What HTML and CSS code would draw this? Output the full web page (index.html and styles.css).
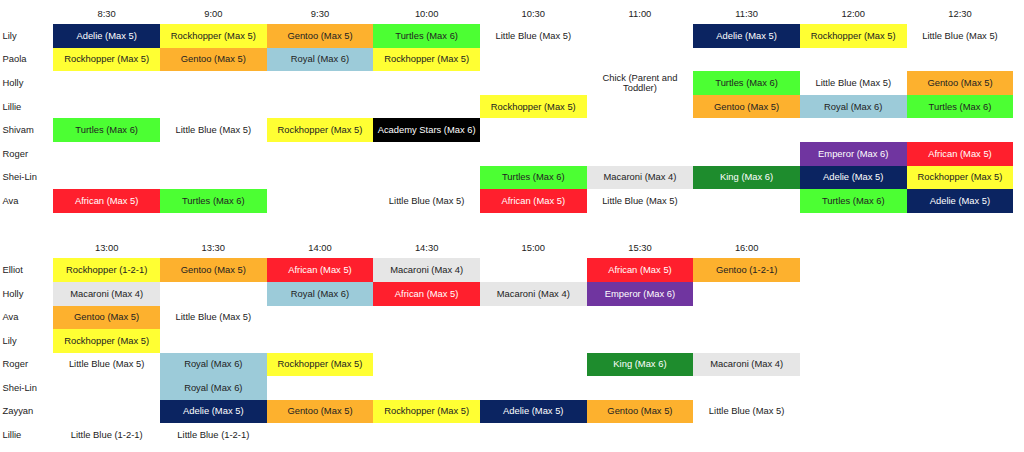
FILE: index.html
```html
<!DOCTYPE html>
<html>
<head>
<meta charset="utf-8">
<link rel="stylesheet" href="styles.css">
</head>
<body>
<table class="sched sched-9">
  <colgroup><col class="c-name"><col class="c-slot"><col class="c-slot"><col class="c-slot"><col class="c-slot"><col class="c-slot"><col class="c-slot"><col class="c-slot"><col class="c-slot"><col class="c-slot"></colgroup>
  <thead>
    <tr><th></th><th>8:30</th><th>9:00</th><th>9:30</th><th>10:00</th><th>10:30</th><th>11:00</th><th>11:30</th><th>12:00</th><th>12:30</th></tr>
  </thead>
  <tbody>
    <tr><td class="name">Lily</td><td class="adelie">Adelie (Max 5)</td><td class="rock">Rockhopper (Max 5)</td><td class="gentoo">Gentoo (Max 5)</td><td class="turtles">Turtles (Max 6)</td><td>Little Blue (Max 5)</td><td></td><td class="adelie">Adelie (Max 5)</td><td class="rock">Rockhopper (Max 5)</td><td>Little Blue (Max 5)</td></tr>
    <tr><td class="name">Paola</td><td class="rock">Rockhopper (Max 5)</td><td class="gentoo">Gentoo (Max 5)</td><td class="royal">Royal (Max 6)</td><td class="rock">Rockhopper (Max 5)</td><td></td><td></td><td></td><td></td><td></td></tr>
    <tr><td class="name">Holly</td><td></td><td></td><td></td><td></td><td></td><td class="chick">Chick (Parent and Toddler)</td><td class="turtles">Turtles (Max 6)</td><td>Little Blue (Max 5)</td><td class="gentoo">Gentoo (Max 5)</td></tr>
    <tr><td class="name">Lillie</td><td></td><td></td><td></td><td></td><td class="rock">Rockhopper (Max 5)</td><td></td><td class="gentoo">Gentoo (Max 5)</td><td class="royal">Royal (Max 6)</td><td class="turtles">Turtles (Max 6)</td></tr>
    <tr><td class="name">Shivam</td><td class="turtles">Turtles (Max 6)</td><td>Little Blue (Max 5)</td><td class="rock">Rockhopper (Max 5)</td><td class="academy">Academy Stars (Max 6)</td><td></td><td></td><td></td><td></td><td></td></tr>
    <tr><td class="name">Roger</td><td></td><td></td><td></td><td></td><td></td><td></td><td></td><td class="emperor">Emperor (Max 6)</td><td class="african">African (Max 5)</td></tr>
    <tr><td class="name">Shei-Lin</td><td></td><td></td><td></td><td></td><td class="turtles">Turtles (Max 6)</td><td class="macaroni">Macaroni (Max 4)</td><td class="king">King (Max 6)</td><td class="adelie">Adelie (Max 5)</td><td class="rock">Rockhopper (Max 5)</td></tr>
    <tr><td class="name">Ava</td><td class="african">African (Max 5)</td><td class="turtles">Turtles (Max 6)</td><td></td><td>Little Blue (Max 5)</td><td class="african">African (Max 5)</td><td>Little Blue (Max 5)</td><td></td><td class="turtles">Turtles (Max 6)</td><td class="adelie">Adelie (Max 5)</td></tr>
  </tbody>
</table>

<table class="sched sched-7">
  <colgroup><col class="c-name"><col class="c-slot"><col class="c-slot"><col class="c-slot"><col class="c-slot"><col class="c-slot"><col class="c-slot"><col class="c-slot"></colgroup>
  <thead>
    <tr><th></th><th>13:00</th><th>13:30</th><th>14:00</th><th>14:30</th><th>15:00</th><th>15:30</th><th>16:00</th></tr>
  </thead>
  <tbody>
    <tr><td class="name">Elliot</td><td class="rock">Rockhopper (1-2-1)</td><td class="gentoo">Gentoo (Max 5)</td><td class="african">African (Max 5)</td><td class="macaroni">Macaroni (Max 4)</td><td></td><td class="african">African (Max 5)</td><td class="gentoo">Gentoo (1-2-1)</td></tr>
    <tr><td class="name">Holly</td><td class="macaroni">Macaroni (Max 4)</td><td></td><td class="royal">Royal (Max 6)</td><td class="african">African (Max 5)</td><td class="macaroni">Macaroni (Max 4)</td><td class="emperor">Emperor (Max 6)</td><td></td></tr>
    <tr><td class="name">Ava</td><td class="gentoo">Gentoo (Max 5)</td><td>Little Blue (Max 5)</td><td></td><td></td><td></td><td></td><td></td></tr>
    <tr><td class="name">Lily</td><td class="rock">Rockhopper (Max 5)</td><td></td><td></td><td></td><td></td><td></td><td></td></tr>
    <tr><td class="name">Roger</td><td>Little Blue (Max 5)</td><td class="royal">Royal (Max 6)</td><td class="rock">Rockhopper (Max 5)</td><td></td><td></td><td class="king">King (Max 6)</td><td class="macaroni">Macaroni (Max 4)</td></tr>
    <tr><td class="name">Shei-Lin</td><td></td><td class="royal">Royal (Max 6)</td><td></td><td></td><td></td><td></td><td></td></tr>
    <tr><td class="name">Zayyan</td><td></td><td class="adelie">Adelie (Max 5)</td><td class="gentoo">Gentoo (Max 5)</td><td class="rock">Rockhopper (Max 5)</td><td class="adelie">Adelie (Max 5)</td><td class="gentoo">Gentoo (Max 5)</td><td>Little Blue (Max 5)</td></tr>
    <tr><td class="name">Lillie</td><td>Little Blue (1-2-1)</td><td>Little Blue (1-2-1)</td><td></td><td></td><td></td><td></td><td></td></tr>
  </tbody>
</table>
</body>
</html>
```

FILE: styles.css
```css
html, body {
  margin: 0;
  padding: 0;
  background: #ffffff;
}

body {
  font-family: "Liberation Sans", Arial, Helvetica, sans-serif;
  font-size: 9.4px;
  color: #222222;
}

.sched {
  border-collapse: collapse;
  border-spacing: 0;
  table-layout: fixed;
}

.sched-9 {
  width: 1013.33px;
}

.sched-7 {
  width: 800px;
  margin-top: 21.5px;
}

.c-name {
  width: 53.33px;
}

.c-slot {
  width: 106.67px;
}

.sched th {
  height: 24.3px;
  padding: 0;
  font-weight: normal;
  text-align: center;
  vertical-align: middle;
  padding-top: 2px;
  box-sizing: border-box;
}

.sched td {
  height: 23.55px;
  padding: 0 3px;
  text-align: center;
  vertical-align: middle;
  line-height: 10.4px;
  box-sizing: border-box;
  white-space: normal;
}

.sched td.name {
  text-align: left;
  padding-left: 2.5px;
}

.sched td.chick {
  padding: 0 10px;
}

.adelie { background: #0b2461; color: #ffffff; }
.rock { background: #ffff33; }
.gentoo { background: #fdb12e; }
.turtles { background: #4cff33; }
.royal { background: #9ccbd9; }
.academy { background: #000000; color: #ffffff; }
.macaroni { background: #e6e6e6; }
.african { background: #ff1f2d; color: #ffffff; }
.emperor { background: #7035a0; color: #ffffff; }
.king { background: #1e8c2d; color: #ffffff; }
```
